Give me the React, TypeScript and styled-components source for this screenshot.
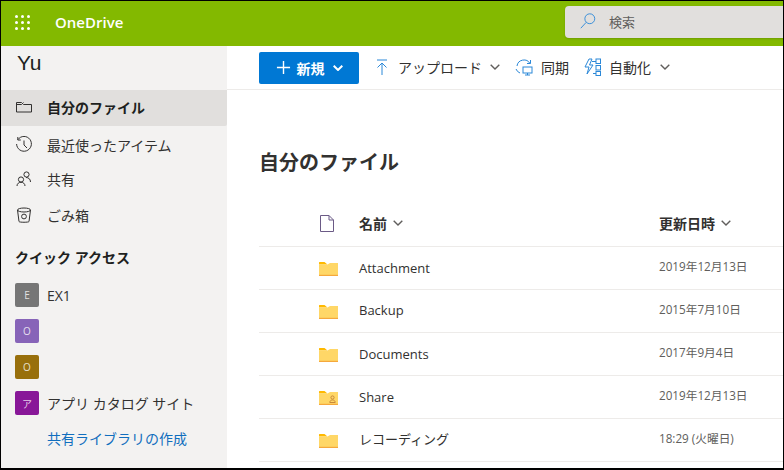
import React from "react";
import styled, { createGlobalStyle } from "styled-components";

const GlobalStyle = createGlobalStyle`
  html, body {
    margin: 0;
    padding: 0;
    background: #000;
  }
  body {
    font-family: "Open Sans", "Noto Sans CJK JP", sans-serif;
    color: #323130;
  }
`;

const Frame = styled.div`
  box-sizing: border-box;
  width: 784px;
  height: 470px;
  padding: 1px 1px 2px 1px;
  background: #000;
  display: flex;
  flex-direction: column;
  overflow: hidden;
`;

const Header = styled.header`
  flex: 0 0 45px;
  background: #83b900;
  display: flex;
  align-items: center;
  padding-left: 14px;
`;

const Waffle = styled.div`
  display: grid;
  grid-template-columns: repeat(3, 3px);
  grid-auto-rows: 3px;
  gap: 3px;
  margin-right: 25px;
  margin-top: -3px;
`;

const Dot = styled.span`
  background: #fff;
  border-radius: 50%;
`;

const Brand = styled.div`
  font-size: 15px;
  font-weight: 600;
  color: #fff;
  margin-top: -3px;
`;

const Search = styled.div`
  margin-left: auto;
  align-self: flex-start;
  margin-top: 5px;
  width: 218px;
  height: 32px;
  background: #e1dfdd;
  border-radius: 4px 0 0 4px;
  display: flex;
  align-items: center;
  gap: 12px;
  padding: 0 0 2px 14px;
  box-sizing: border-box;
  font-size: 13px;
  color: #605e5c;
  box-shadow: 0 1px 2px rgba(0, 0, 0, 0.15);
`;

const Body = styled.div`
  flex: 1;
  display: flex;
  min-height: 0;
  background: #fff;
`;

const Sidebar = styled.nav`
  flex: 0 0 226px;
  background: #f3f2f1;
  display: flex;
  flex-direction: column;
`;

const Account = styled.div`
  height: 44px;
  padding: 2px 0 0 16px;
  box-sizing: border-box;
  font-size: 21px;
  line-height: 30px;
  color: #201f1e;
  font-family: "Liberation Sans", sans-serif;
`;

const NavItem = styled.div<{ $active?: boolean; $height: number }>`
  height: ${(p) => p.$height}px;
  box-sizing: border-box;
  display: flex;
  align-items: center;
  padding: 0 0 ${(p) => (p.$active ? 2 : 0)}px 14px;
  gap: 14px;
  font-size: 14px;
  font-weight: ${(p) => (p.$active ? 700 : 400)};
  color: ${(p) => (p.$active ? "#201f1e" : "#323130")};
  background: ${(p) => (p.$active ? "#e1dfdd" : "transparent")};
  border-radius: ${(p) => (p.$active ? "0 0 2px 0" : "0")};
`;

const NavIcon = styled.svg`
  width: 18px;
  height: 18px;
  flex: none;
  fill: none;
  stroke: #323130;
  stroke-width: 1;
`;

const SectionTitle = styled.div`
  font-size: 14px;
  font-weight: 700;
  color: #201f1e;
  padding: 12px 0 0 14px;
  height: 42px;
  box-sizing: border-box;
`;

const SiteRow = styled.div`
  height: 36px;
  display: flex;
  align-items: center;
  padding-left: 14px;
  gap: 8px;
  font-size: 14px;
  color: #323130;
`;

const SiteTile = styled.span<{ $color: string }>`
  width: 24px;
  height: 24px;
  border-radius: 2px;
  background: ${(p) => p.$color};
  color: rgba(255, 255, 255, 0.8);
  font-size: 10px;
  display: flex;
  align-items: center;
  justify-content: center;
  flex: none;
`;

const CreateLink = styled.div`
  padding: 6px 0 0 47px;
  margin-left: -1px;
  font-size: 14px;
  line-height: 24px;
  color: #106ebe;
`;

const Main = styled.main`
  flex: 1;
  display: flex;
  flex-direction: column;
  min-width: 0;
`;

const Toolbar = styled.div`
  flex: 0 0 44px;
  box-sizing: border-box;
  border-bottom: 1px solid #edebe9;
  display: flex;
  align-items: flex-start;
  padding: 6px 0 0 32px;
`;

const NewButton = styled.div`
  width: 100px;
  height: 32px;
  box-sizing: border-box;
  padding-bottom: 1px;
  background: #0078d4;
  border-radius: 2px;
  color: #fff;
  font-size: 14px;
  font-weight: 700;
  display: flex;
  align-items: center;
  justify-content: center;
  gap: 6px;
  margin-right: 13px;
`;

const ToolItem = styled.div<{ $gap: number; $after: number }>`
  height: 32px;
  display: flex;
  align-items: center;
  gap: ${(p) => p.$gap}px;
  margin-right: ${(p) => p.$after}px;
  margin-top: -1px;
  font-size: 14px;
  color: #323130;
`;

const ToolIcon = styled.svg`
  width: 20px;
  height: 20px;
  flex: none;
  fill: none;
  stroke: #2b88d8;
  stroke-width: 1;
`;

const SearchIcon = styled(ToolIcon)`
  width: 18px;
  height: 18px;
`;

const Chevron = styled.svg<{ $color?: string; $width?: number; $indent?: number }>`
  width: 10px;
  height: 6px;
  flex: none;
  fill: none;
  stroke: ${(p) => p.$color || "#605e5c"};
  stroke-width: ${(p) => p.$width || 1.4};
  margin-left: ${(p) => p.$indent || 0}px;
`;

const Content = styled.div`
  flex: 1;
  padding-left: 32px;
  display: flex;
  flex-direction: column;
  min-width: 0;
`;

const Title = styled.h1`
  margin: 0;
  height: 110px;
  padding-top: 58px;
  box-sizing: border-box;
  font-size: 20px;
  line-height: 30px;
  font-weight: 700;
  color: #323130;
`;

const Row = styled.div<{ $height: number }>`
  height: ${(p) => p.$height}px;
  box-sizing: border-box;
  border-bottom: 1px solid #edebe9;
  display: grid;
  grid-template-columns: 60px 40px 300px 1fr;
  align-items: center;
  font-size: 13px;
`;

const HeaderName = styled.div`
  display: flex;
  align-items: center;
  gap: 6px;
  font-weight: 700;
  font-size: 14px;
  color: #323130;
`;

const Name = styled.div<{ $raise?: number }>`
  color: #323130;
  font-size: 13px;
  margin-bottom: ${(p) => p.$raise || 0}px;
`;

const Modified = styled.div`
  color: #605e5c;
  font-size: 11.7px;
  margin-top: -6px;
`;

const IconCell = styled.div`
  grid-column: 2;
  display: flex;
  align-items: center;
`;

const PageIcon = styled.svg`
  width: 14px;
  height: 17px;
  margin-left: 1px;
  fill: #fff;
  stroke: #6b5a86;
  stroke-width: 1;
`;

const FolderIcon = styled.svg`
  width: 19px;
  height: 15px;
`;

const Folder: React.FC<{ shared?: boolean }> = ({ shared }) => (
  <FolderIcon viewBox="0 0 19 15">
    <path d="M0 1.5a.5.5 0 0 1 .5-.5h5l3 2.5H0z" fill="#ffb900" />
    <path d="M0 3.5h8.5L11 2h8v13H0z" fill="#ffd767" />
    <rect x="0" y="13.8" width="19" height="1.2" fill="#f5a83c" />
    {shared && (
      <g fill="none" stroke="#c9873a" strokeWidth="1">
        <circle cx="13.5" cy="7.5" r="1.6" />
        <path d="M10.8 12.5c0-3.4 5.4-3.4 5.4 0z" />
      </g>
    )}
  </FolderIcon>
);

const Down: React.FC<{ indent?: number }> = ({ indent }) => (
  <Chevron viewBox="0 0 10 6" $indent={indent}>
    <path d="M.7.7 5 5l4.3-4.3" />
  </Chevron>
);

const files = [
  { name: "Attachment", date: "2019年12月13日", height: 43 },
  { name: "Backup", date: "2015年7月10日", height: 43, raise: 2 },
  { name: "Documents", date: "2017年9月4日", height: 43 },
  { name: "Share", date: "2019年12月13日", height: 43, shared: true },
  { name: "レコーディング", date: "18:29 (火曜日)", height: 43, raise: 4 },
];

const App: React.FC = () => {
  return (
    <Frame>
      <GlobalStyle />
      <Header>
        <Waffle>
          {Array.from({ length: 9 }).map((_, i) => (
            <Dot key={i} />
          ))}
        </Waffle>
        <Brand>OneDrive</Brand>
        <Search>
          <SearchIcon viewBox="0 0 20 20">
            <circle cx="12" cy="7.5" r="5.5" />
            <path d="M8 11.5 2 18" />
          </SearchIcon>
          検索
        </Search>
      </Header>
      <Body>
        <Sidebar>
          <Account>Yu</Account>
          <NavItem $active $height={36}>
            <NavIcon viewBox="0 0 18 18">
              <path d="M1.5 14V4.5h5l2 2h8V14z" />
              <path d="M1.5 6.5h5l2-2" />
            </NavIcon>
            自分のファイル
          </NavItem>
          <NavItem $height={38}>
            <NavIcon viewBox="0 0 18 18">
              <path d="M3 3.5A7.4 7.4 0 1 1 1.6 8" />
              <path d="M2.8 1v3h3M9 4.5V9l3 3" />
            </NavIcon>
            最近使ったアイテム
          </NavItem>
          <NavItem $height={30}>
            <NavIcon viewBox="0 0 18 18">
              <circle cx="11.5" cy="4.5" r="2.6" />
              <circle cx="6" cy="9.5" r="2.6" />
              <path d="M2 16c0-5 8-5 8 0M11 7.5c2.5 0 4.5 1.5 4.5 4.5" />
            </NavIcon>
            共有
          </NavItem>
          <NavItem $height={41}>
            <NavIcon viewBox="0 0 18 18">
              <ellipse cx="9" cy="4" rx="6.5" ry="2" />
              <path d="M2.5 4 4 15.5c.2 1 9.8 1 10 0L15.500 4" />
              <circle cx="9" cy="10.5" r="2.4" />
            </NavIcon>
            ごみ箱
          </NavItem>
          <SectionTitle>クイック アクセス</SectionTitle>
          <SiteRow>
            <SiteTile $color="#767676">E</SiteTile>
            EX1
          </SiteRow>
          <SiteRow>
            <SiteTile $color="#8764b8">O</SiteTile>
          </SiteRow>
          <SiteRow>
            <SiteTile $color="#986f0b">O</SiteTile>
          </SiteRow>
          <SiteRow>
            <SiteTile $color="#881798">ア</SiteTile>
            アプリ カタログ サイト
          </SiteRow>
          <CreateLink>共有ライブラリの作成</CreateLink>
        </Sidebar>
        <Main>
          <Toolbar>
            <NewButton>
              <svg width="15" height="15" viewBox="0 0 16 16" stroke="#fff" strokeWidth="1.5">
                <path d="M8 1v14M1 8h14" />
              </svg>
              新規
              <Chevron viewBox="0 0 10 6" $color="#fff" $width={2} $indent={2}>
                <path d="M.7.7 5 5l4.300-4.300" />
              </Chevron>
            </NewButton>
            <ToolItem $gap={6} $after={14}>
              <ToolIcon viewBox="0 0 20 20">
                <path d="M5 3h10M10 18V6M5.500 10.500 10 6l4.500 4.500" />
              </ToolIcon>
              アップロード
              <Down indent={2} />
            </ToolItem>
            <ToolItem $gap={7} $after={14}>
              <ToolIcon viewBox="0 0 20 20">
                <path d="M3 9a7 7 0 0 1 13-2.500M16.500 3v3.500H13M2 12a7 7 0 0 0 4 4" />
                <rect x="9" y="10" width="9" height="6" />
                <path d="M13.500 16v2M11 18h5" />
              </ToolIcon>
              同期
            </ToolItem>
            <ToolItem $gap={6} $after={0}>
              <ToolIcon viewBox="0 0 20 20">
                <path d="M6 2 2 10h4l-2 7 6-9H6.500L9 2z" />
                <rect x="13" y="2" width="4.500" height="4.500" />
                <rect x="13" y="8.500" width="4.500" height="4.500" />
                <rect x="13" y="14.500" width="4.500" height="4" />
                <path d="M9 4.500h4M10 16.500h3" />
              </ToolIcon>
              自動化
              <Down indent={3} />
            </ToolItem>
          </Toolbar>
          <Content>
            <Title>自分のファイル</Title>
            <Row $height={47}>
              <IconCell>
                <PageIcon viewBox="0 0 14 17">
                  <path d="M.5.500h8.500l4.500 4.500v11.500H.5zM9 .5V5h4.500" />
                </PageIcon>
              </IconCell>
              <HeaderName>
                名前
                <Down />
              </HeaderName>
              <HeaderName>
                更新日時
                <Down />
              </HeaderName>
            </Row>
            {files.map((file) => (
              <Row key={file.name} $height={file.height}>
                <IconCell>
                  <Folder shared={file.shared} />
                </IconCell>
                <Name $raise={file.raise}>{file.name}</Name>
                <Modified>{file.date}</Modified>
              </Row>
            ))}
          </Content>
        </Main>
      </Body>
    </Frame>
  );
};

export default App;
